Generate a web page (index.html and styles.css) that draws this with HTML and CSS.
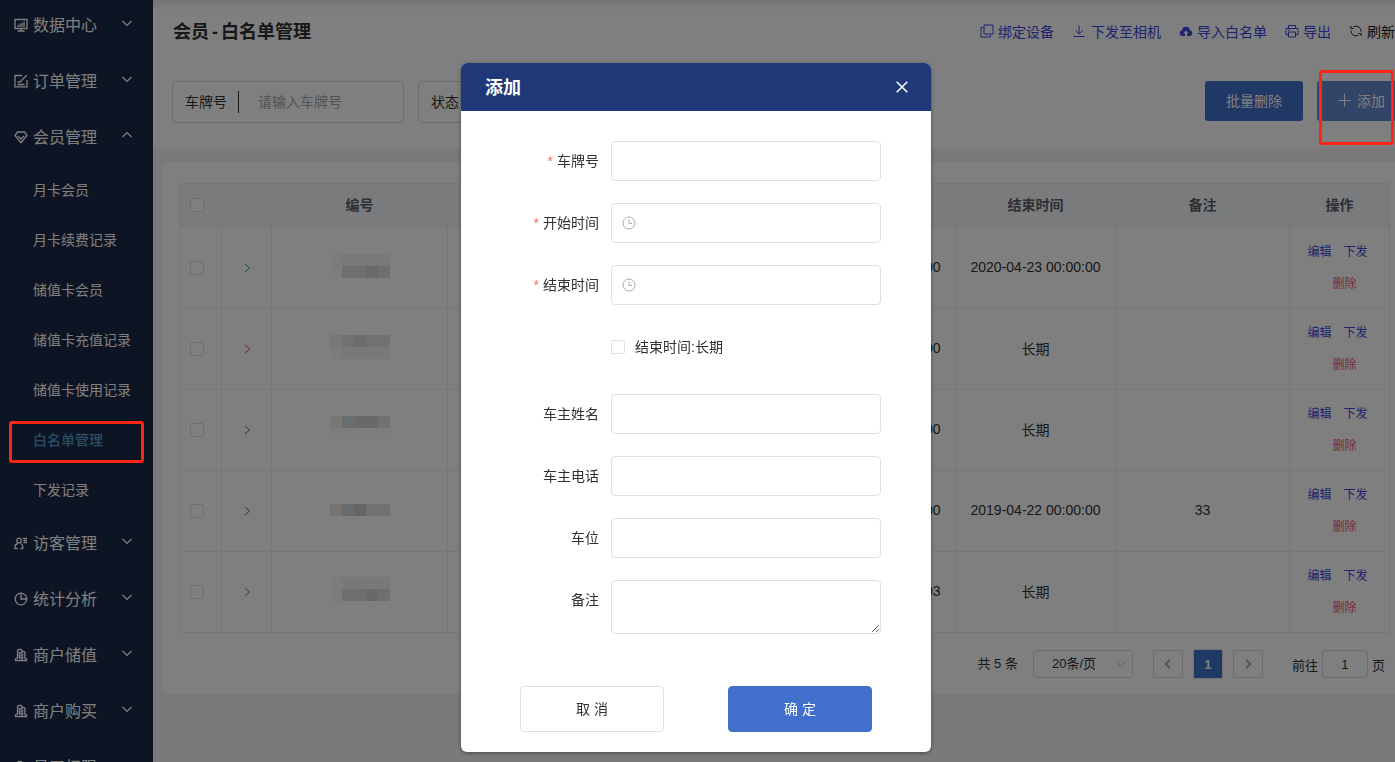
FILE: index.html
```html
<!DOCTYPE html>
<html lang="zh-CN">
<head>
<meta charset="utf-8">
<title>会员 - 白名单管理</title>
<link rel="stylesheet" href="styles.css">
</head>
<body>
<svg class="sprite" aria-hidden="true">
  <symbol id="chev" viewBox="0 0 12 12"><path d="M1.5 4 6 8.500 10.500 4"/></symbol>
  <symbol id="next" viewBox="0 0 12 12"><path d="M4 2l4.500 4L4 10"/></symbol>
  <symbol id="prev" viewBox="0 0 12 12"><path d="M8 2 3.500 6 8 10"/></symbol>
  <symbol id="clock" viewBox="0 0 14 14"><circle cx="7" cy="7" r="6"/><path d="M7 3.500V7.500H10"/></symbol>
  <symbol id="shop" viewBox="0 0 14 14"><path d="M3.500 10V3q0-1.500 1.500-1.500h1.500Q8 1.500 8 3v9.500M8 3.500h1.500q1.500 0 1.500 1.500v6M5.700 4v7M3.500 10 1.500 11v1.500h11V11L11 10.500"/><path class="fine" d="M3.500 4.500H8M3.500 7H11M3.500 9.500H11"/></symbol>
</svg>
<div class="app">
  <aside class="sidebar">
    <nav class="menu">
      <a class="item" href="#"><svg class="ico" viewBox="0 0 14 14"><path d="M1 1.500h12v9H1zM3.500 13h7M7 10.500V13M4 9V7M6 9V5.500M8 9V5M10 9V3.500"/></svg><span>数据中心</span><svg class="arrow"><use href="#chev"/></svg></a>
      <a class="item" href="#"><svg class="ico" viewBox="0 0 14 14"><path d="M8 1.500H1v11.300h12V6M12.700 1.300 7 7l-1 1.500M3.500 8H6M3.500 10.500h7"/></svg><span>订单管理</span><svg class="arrow"><use href="#chev"/></svg></a>
      <a class="item" href="#"><svg class="ico" viewBox="0 0 14 14"><path d="M3.500 2h7L13 5.500 7 12.700 1 5.500zM4 6l3 3 3-3"/></svg><span>会员管理</span><svg class="arrow up"><use href="#chev"/></svg></a>
      <a class="sub" href="#">月卡会员</a>
      <a class="sub" href="#">月卡续费记录</a>
      <a class="sub" href="#">储值卡会员</a>
      <a class="sub" href="#">储值卡充值记录</a>
      <a class="sub" href="#">储值卡使用记录</a>
      <a class="sub active" href="#">白名单管理</a>
      <a class="sub" href="#">下发记录</a>
      <a class="item" href="#"><svg class="ico" viewBox="0 0 14 14"><circle cx="5" cy="4.500" r="2.300"/><path d="M1 13v-2q0-3 3-3.500M.8 12.500h2.700M9 12.500H6.500M6.500 7.500q2.500 1 2.500 5M9 2.500h4M9.500 4.500H13M9.500 6.500H13"/></svg><span>访客管理</span><svg class="arrow"><use href="#chev"/></svg></a>
      <a class="item" href="#"><svg class="ico" viewBox="0 0 14 14"><circle cx="7" cy="7" r="5.800"/><path d="M7 1.500V7h5.500"/></svg><span>统计分析</span><svg class="arrow"><use href="#chev"/></svg></a>
      <a class="item" href="#"><svg class="ico"><use href="#shop"/></svg><span>商户储值</span><svg class="arrow"><use href="#chev"/></svg></a>
      <a class="item" href="#"><svg class="ico"><use href="#shop"/></svg><span>商户购买</span><svg class="arrow"><use href="#chev"/></svg></a>
      <a class="item" href="#"><svg class="ico"><use href="#shop"/></svg><span>员工权限</span><svg class="arrow"><use href="#chev"/></svg></a>
    </nav>
  </aside>
  <main class="main">
    <header class="top">
      <div class="title-row">
        <h1>会员<span class="dash">-</span>白名单管理</h1>
        <div class="links">
          <a href="#"><svg viewBox="0 0 14 14"><path d="M4 1h9v9H4zM3 3.500H1V13h9.500v-2"/></svg>绑定设备</a>
          <a href="#" class="wide"><svg viewBox="0 0 14 14"><path d="M7 1.500v8M3.500 6.500 7 10l3.500-3.500M1.500 12.500h11"/></svg>下发至相机</a>
          <a href="#"><svg viewBox="0 0 14 14"><path class="solid" d="M6 12H4Q.7 12 .7 9 .7 6.700 3 6.200 3.500 2.800 7 2.800T11 6.200q2.300.5 2.300 2.800 0 3-3.300 3H8V9.500H9.700L7 6.500 4.300 9.500H6z"/></svg>导入白名单</a>
          <a href="#"><svg viewBox="0 0 14 14"><path d="M3.500 4V1.500h7V4M3.500 10.500H1V4.500h12v6h-2.500M3.500 8h7v5h-7zM3 6.300h1.500"/></svg>导出</a>
          <a href="#" class="dark"><svg viewBox="0 0 14 14"><path d="M4.500 2.800Q8 1 10.500 3.500 12 5 12 7.500M9.500 11.200Q6 13 3.500 10.500 2 9 2 6.500M1.800 2v2.500h2.700M12.200 12V9.500H9.500"/></svg>刷新</a>
        </div>
      </div>
      <form class="filters">
        <label class="filter plate"><span>车牌号</span><input type="text" placeholder="请输入车牌号"></label>
        <label class="filter state"><span>状态</span><input type="text"></label>
        <div class="actions">
          <button type="button" class="btn">批量删除</button>
          <button type="button" class="btn add"><svg viewBox="0 0 12 12"><path d="M6 0v12M0 6h12"/></svg>添加</button>
        </div>
      </form>
    </header>
    <section class="card">
      <table>
        <colgroup><col class="c-check"><col class="c-open"><col class="c-id"><col><col class="c-time"><col class="c-time"><col class="c-note"><col class="c-act"></colgroup>
        <thead><tr><th><input type="checkbox" aria-label="全选"></th><th></th><th>编号</th><th></th><th>开始时间</th><th>结束时间</th><th>备注</th><th>操作</th></tr></thead>
        <tbody>
          <tr><td><input type="checkbox" aria-label="选择"></td><td><svg class="open green"><use href="#next"/></svg></td><td><div class="mosaic a"><i></i><i></i><i></i><i></i><i></i><i></i><i></i><i></i><i></i><i></i></div></td><td></td><td>2019-04-23 00:00:00</td><td>2020-04-23 00:00:00</td><td></td><td><div class="ops"><a href="#">编辑</a><a href="#">下发</a></div><div class="ops del"><a href="#">删除</a></div></td></tr>
          <tr><td><input type="checkbox" aria-label="选择"></td><td><svg class="open red"><use href="#next"/></svg></td><td><div class="mosaic b"><i></i><i></i><i></i><i></i><i></i><i></i><i></i><i></i><i></i><i></i></div></td><td></td><td>2019-04-23 00:00:00</td><td>长期</td><td></td><td><div class="ops"><a href="#">编辑</a><a href="#">下发</a></div><div class="ops del"><a href="#">删除</a></div></td></tr>
          <tr><td><input type="checkbox" aria-label="选择"></td><td><svg class="open"><use href="#next"/></svg></td><td><div class="mosaic c"><i></i><i></i><i></i><i></i><i></i><i></i><i></i><i></i><i></i><i></i></div></td><td></td><td>2019-04-22 00:00:00</td><td>长期</td><td></td><td><div class="ops"><a href="#">编辑</a><a href="#">下发</a></div><div class="ops del"><a href="#">删除</a></div></td></tr>
          <tr><td><input type="checkbox" aria-label="选择"></td><td><svg class="open"><use href="#next"/></svg></td><td><div class="mosaic d"><i></i><i></i><i></i><i></i><i></i></div></td><td></td><td>2019-04-22 00:00:00</td><td>2019-04-22 00:00:00</td><td>33</td><td><div class="ops"><a href="#">编辑</a><a href="#">下发</a></div><div class="ops del"><a href="#">删除</a></div></td></tr>
          <tr><td><input type="checkbox" aria-label="选择"></td><td><svg class="open"><use href="#next"/></svg></td><td><div class="mosaic a e"><i></i><i></i><i></i><i></i><i></i><i></i><i></i><i></i><i></i><i></i></div></td><td></td><td>2019-04-20 10:00:03</td><td>长期</td><td></td><td><div class="ops"><a href="#">编辑</a><a href="#">下发</a></div><div class="ops del"><a href="#">删除</a></div></td></tr>
        </tbody>
      </table>
      <div class="pager">
        <span class="total">共 5 条</span>
        <div class="size"><select aria-label="每页条数"><option>20条/页</option></select><svg><use href="#chev"/></svg></div>
        <div class="pages">
          <button type="button" class="pg" aria-label="上一页"><svg><use href="#prev"/></svg></button>
          <button type="button" class="pg on">1</button>
          <button type="button" class="pg" aria-label="下一页"><svg><use href="#next"/></svg></button>
        </div>
        <label class="jump">前往<input type="text" value="1">页</label>
      </div>
    </section>
  </main>
</div>
<div class="overlay">
  <div class="modal" role="dialog" aria-labelledby="dlg">
    <div class="modal-head"><h2 id="dlg">添加</h2><button type="button" class="close" aria-label="关闭"><svg viewBox="0 0 12 12"><path d="M.7.7l10.600 10.600M11.300.7.7 11.300"/></svg></button></div>
    <form class="form">
      <div class="field"><label for="f1" class="req">车牌号</label><input id="f1" type="text"></div>
      <div class="field"><label for="f2" class="req">开始时间</label><div class="date"><svg><use href="#clock"/></svg><input id="f2" type="text"></div></div>
      <div class="field"><label for="f3" class="req">结束时间</label><div class="date"><svg><use href="#clock"/></svg><input id="f3" type="text"></div></div>
      <div class="field check"><input id="f4" type="checkbox"><label for="f4">结束时间:长期</label></div>
      <div class="field"><label for="f5">车主姓名</label><input id="f5" type="text"></div>
      <div class="field"><label for="f6">车主电话</label><input id="f6" type="text"></div>
      <div class="field"><label for="f7">车位</label><input id="f7" type="text"></div>
      <div class="field"><label for="f8">备注</label><textarea id="f8"></textarea></div>
      <div class="buttons"><button type="button" class="cancel">取 消</button><button type="button" class="ok">确 定</button></div>
    </form>
  </div>
</div>
<div class="mark mark-menu"></div>
<div class="mark mark-add"></div>
</body>
</html>
```
FILE: styles.css
```css
* { box-sizing: border-box; }
body { margin: 0; height: 100vh; overflow: hidden; font-family: "Liberation Sans", "Noto Sans CJK SC", sans-serif; font-size: 14px; color: #303133; background: #f4f4f4; }
a { color: inherit; text-decoration: none; }
button, input, select, textarea { font: inherit; color: inherit; margin: 0; }
svg { fill: none; stroke: currentColor; flex: none; }
.sprite { position: absolute; width: 0; height: 0; }
.fine { stroke-width: 1; opacity: .7; }
.app { display: flex; height: 100%; }

.sidebar { width: 153px; flex: none; overflow: hidden; background: #1a2846; color: #fff; }
.menu { margin-top: -4px; }
.item { display: flex; align-items: center; height: 56px; padding: 0 20px 0 14px; font-size: 16px; gap: 5px; }
.item .ico { width: 14px; height: 14px; margin-top: 2px; stroke-width: 1.3; }
.item .arrow { width: 12px; height: 12px; margin: 0 0 2px auto; stroke-width: 1.2; }
.item .arrow.up { transform: rotate(180deg); }
.sub { display: flex; align-items: center; height: 50px; padding-left: 33px; }
.sub.active { color: #539fcd; font-weight: 500; }

.main { flex: 1; min-width: 0; }
.top { height: 148px; padding-left: 19px; background: linear-gradient(#e6e6e6, #fff 10px); }
.title-row { display: flex; align-items: center; justify-content: space-between; height: 60px; }
h1 { margin: 0 0 0 1px; font-size: 18px; }
.dash { margin: 0 3px; }
.links { display: flex; gap: 18px; padding-top: 2px; color: #3a46dc; }
.links a { display: flex; align-items: center; gap: 4px; }
.links .wide { gap: 5px; }
.links svg { width: 14px; height: 14px; }
.links .solid { fill: currentColor; stroke: none; }
.links .dark { color: #222; }
.filters { display: flex; align-items: center; gap: 14px; margin-top: 21px; }
.filter { display: flex; align-items: center; height: 42px; padding-left: 12px; border: 1px solid #d4d6dc; border-radius: 5px; }
.filter span { padding-right: 11px; line-height: 22px; border-right: 1px solid #303133; }
.filter input { flex: 1; min-width: 0; border: 0; outline: 0; background: none; padding: 0 19px; }
.filter input::placeholder { color: #a4a6aa; }
.plate { width: 232px; }
.state { width: 232px; }
.actions { display: flex; gap: 14px; margin-left: auto; margin-bottom: 2px; }
.btn { height: 40px; padding: 0 21px 2px; border: 0; border-radius: 3px; background: #4070cb; color: #fff; }
.btn.add { display: flex; align-items: center; gap: 6px; padding-right: 10px; border-radius: 3px 0 0 3px; background: #6488ce; }
.btn.add svg { width: 13px; height: 13px; }

.card { margin: 14px 0 0 10px; padding: 21px 5px 15px 16px; background: #fff; }
table { width: 100%; table-layout: fixed; border-collapse: collapse; text-align: center; }
th, td { padding: 7px 0 9px; border: 1px solid #ebeef5; }
th { height: 44px; padding: 0 0 3px; background: #f5f7fa; color: #5b5e64; }
td:last-child { padding: 8px 0; }
.c-check { width: 42px; }
.c-open { width: 50px; }
.c-id { width: 176px; }
.c-time { width: 160px; }
.c-note { width: 174px; }
.c-act { width: 100px; }
th:first-child, td:first-child { padding-right: 8px; }
input[type="checkbox"] { appearance: none; display: inline-block; width: 14px; height: 14px; border: 1px solid #dcdfe6; border-radius: 2px; background: #fff; vertical-align: middle; }
.open { display: inline-block; width: 12px; height: 12px; color: #666; vertical-align: middle; }
.open.green { color: #3b9b7b; }
.open.red { color: #c14e5e; }
.ops { display: flex; justify-content: center; gap: 12px; padding-right: 4px; font-size: 12px; line-height: 32px; color: #3a46dc; }
.ops.del { padding: 0 0 0 10px; color: #f5546a; }
.mosaic { display: grid; grid-template-columns: repeat(5, 12px); grid-auto-rows: 12px; justify-content: center; padding-bottom: 2px; }
.mosaic.d { padding: 0; }
.mosaic.e { padding-bottom: 4px; }
.mosaic i { background: #f2f2f3; }
.mosaic i:nth-child(5n+1) { background: #fbf9f6; }
.a i:nth-child(1) { background: #f9f9f9; border-radius: 6px 0 0; }
.a i:nth-child(n+7) { background: #dedfe1; }
.a i:nth-child(9) { background: #d2d2d4; }
.b i:nth-child(-n+5) { background: #e5e5e7; }
.b i:nth-child(1) { background: #f3f1ed; }
.b i:nth-child(3) { background: #d9d9dc; }
.b i:nth-child(9) { background: #f2f2ea; }
.mosaic.c i { background: #fafafa; }
.mosaic.c i:nth-child(1) { background: #f3efe6; }
.mosaic.c i:nth-child(2) { background: #cfdae1; }
.mosaic.c i:nth-child(3), .mosaic.c i:nth-child(4) { background: #d6d2d0; }
.mosaic.c i:nth-child(5) { background: #e1e4ea; }
.mosaic.d i:nth-child(1) { background: #eee4dc; }
.mosaic.d i:nth-child(2) { background: #ccd8df; }
.mosaic.d i:nth-child(3) { background: #cdcbc9; }
.mosaic.d i:nth-child(4), .mosaic.d i:nth-child(5) { background: #e0e3e4; }

.pager { display: flex; align-items: center; justify-content: flex-end; margin-top: 16px; padding-right: 5px; font-size: 13px; }
.total { padding-bottom: 3px; }
.size { display: flex; align-items: center; width: 100px; height: 28px; margin: 0 20px 0 15px; border: 1px solid #d6d9e0; border-radius: 3px; }
.size select { flex: 1; min-width: 0; height: 26px; padding: 0 0 2px 18px; appearance: none; border: 0; background: none; }
.size svg { width: 12px; height: 12px; margin-right: 5px; color: #b4b8c0; }
.pages { display: flex; align-items: center; gap: 10px; }
.pg { display: grid; place-items: center; width: 30px; height: 28px; padding: 0; border: 1px solid #d6d9e0; border-radius: 2px; background: #fff; color: #888; }
.pg.on { height: 30px; border-color: #dfe3ec; background: #4070cb; color: #fff; font-weight: 700; }
.pg svg { width: 12px; height: 12px; stroke-width: 1.4; }
.jump { display: flex; align-items: center; margin-left: 29px; }
.jump input { width: 46px; height: 28px; margin: 0 4px; border: 1px solid #d6d9e0; border-radius: 4px; background: #fff; text-align: center; }

.overlay { position: fixed; inset: 0; display: flex; align-items: flex-start; justify-content: center; padding: 63px 3px 0 0; background: rgba(0, 0, 0, .5); }
.modal { width: 470px; border-radius: 6px; overflow: hidden; background: #fff; box-shadow: 0 1px 4px rgba(0, 0, 0, .4); }
.modal-head { display: flex; align-items: center; justify-content: space-between; height: 48px; padding: 0 23px 0 24px; background: #1f3978; color: #fff; }
h2 { margin: 0; padding-bottom: 2px; font-size: 18px; }
.close { display: flex; padding: 0; border: 0; background: none; }
.close svg { width: 12px; height: 12px; stroke-width: 1.5; }
.form { padding: 30px 50px 20px 0; }
.field { display: flex; margin-bottom: 22px; }
.field > label { width: 150px; padding-right: 12px; line-height: 40px; text-align: right; }
.field > label.req::before { content: "*"; margin-right: 4px; color: #f56c6c; }
.field input[type="text"], .field textarea { flex: 1; min-width: 0; height: 40px; padding: 0 15px; border: 1px solid #dcdfe6; border-radius: 4px; background: #fff; }
.field textarea { height: 54px; resize: vertical; }
.date { display: flex; align-items: center; flex: 1; border: 1px solid #dcdfe6; border-radius: 4px; padding-left: 10px; height: 40px; color: #a8abb2; }
.date svg { width: 14px; height: 14px; }
.field .date input[type="text"] { border: 0; height: 36px; padding: 0 10px; }
.field.check { align-items: center; padding-left: 150px; margin-bottom: 27px; }
.field.check label { width: auto; padding: 0 0 0 10px; }
.buttons { display: flex; justify-content: center; gap: 64px; margin-top: 52px; padding-left: 50px; }
.buttons button { width: 144px; height: 46px; padding: 0 0 2px; border: 1px solid #dcdfe6; border-radius: 4px; background: #fff; }
.buttons .ok { border-color: #4070cb; background: #4070cb; color: #fff; }

.mark { position: fixed; border: 3px solid #ff2414; border-radius: 3px; pointer-events: none; }
.mark-menu { left: 9px; top: 421px; width: 135px; height: 42px; }
.mark-add { right: 1px; top: 70px; width: 75px; height: 75px; }
```
